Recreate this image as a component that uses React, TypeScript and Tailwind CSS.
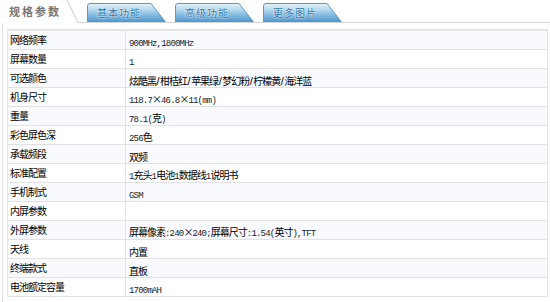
import React from "react";

const rows: [string, string][] = [
  ["网络频率", "900MHz,1800MHz"],
  ["屏幕数量", "1"],
  ["可选颜色", "炫酷黑/柑桔红/苹果绿/梦幻粉/柠檬黄/海洋蓝"],
  ["机身尺寸", "118.7×46.8×11(mm)"],
  ["重量", "78.1(克)"],
  ["彩色屏色深", "256色"],
  ["承载频段", "双频"],
  ["标准配置", "1充头1电池1数据线1说明书"],
  ["手机制式", "GSM"],
  ["内屏参数", ""],
  ["外屏参数", "屏幕像素:240×240;屏幕尺寸:1.54(英寸),TFT"],
  ["天线", "内置"],
  ["终端款式", "直板"],
  ["电池额定容量", "1700mAH"],
];

function Mixed({ text }: { text: string }) {
  const parts = text.match(/[A-Za-z0-9.,:;()]+|\/|[^A-Za-z0-9.,:;()/]+/g) || [];
  return (
    <span className="whitespace-nowrap">
      {parts.map((p, i) =>
        p === "/" ? (
          <span key={i} className="font-['Liberation_Sans',sans-serif] text-[11px] px-[0.5px]">
            /
          </span>
        ) : /^[A-Za-z0-9.,:;()]+$/.test(p) ? (
          <span key={i} className="font-['Liberation_Mono',monospace] text-[9px] tracking-[-0.8px] text-[#222]">
            {p}
          </span>
        ) : (
          <span key={i} className="text-[10px] tracking-[-1px]">
            {p}
          </span>
        )
      )}
    </span>
  );
}

function BlueTab({ label }: { label: string }) {
  return (
    <div className="relative w-[79px] h-[19px] flex items-center">
      <svg className="absolute inset-0" width="79" height="19" viewBox="0 0 79 19">
        <defs>
          <linearGradient id="tabg" x1="0" y1="0" x2="0" y2="1">
            <stop offset="0" stopColor="#e4f2fa" />
            <stop offset="0.35" stopColor="#b2d8ee" />
            <stop offset="1" stopColor="#4a95cd" />
          </linearGradient>
        </defs>
        <path d="M0.5 19 V3 Q0.5 0.5 3 0.5 H64 L78.5 19 Z" fill="url(#tabg)" stroke="#5b98c4" strokeWidth="1" />
      </svg>
      <span className="relative pl-[10px] text-[10px] tracking-[1px] text-[#2a6fa8] [text-shadow:0_0_2px_#ffffff,0_0_1px_#ffffff]">
        {label}
      </span>
    </div>
  );
}

export default function App() {
  return (
    <div className="w-[550px] h-[302px] bg-white overflow-hidden font-['Noto_Sans_CJK_SC',sans-serif] text-[#000]">
      {/* tab bar */}
      <div className="flex items-end h-[23px]">
        <div className="relative w-[79px] h-[23px] flex items-center">
          <svg className="absolute inset-0" width="79" height="23" viewBox="0 0 79 23">
            <path d="M67 0 L78 22.5 H79" fill="none" stroke="#d4d4d4" strokeWidth="1.2" />
          </svg>
          <span className="relative pl-[9px] text-[11px] font-bold tracking-[2px] text-[#777]">规格参数</span>
        </div>
        <div className="flex-1 h-[23px] border-b border-[#d4d4d4] flex items-end gap-[9px] pl-[8px]">
          <BlueTab label="基本功能" />
          <BlueTab label="高级功能" />
          <BlueTab label="更多图片" />
        </div>
      </div>
      {/* panel */}
      <div className="ml-[2px] border-l border-[#e0e0e0] pl-[4px] pt-[6px] h-[279px]">
        <div className="w-[541px] border-x border-t-2 border-[#e4e4e4]">
          {rows.map(([k, v], i) => (
            <div
              key={k}
              className={
                "flex h-[19px] border-b border-[#e2e2e2] " + (i % 2 === 0 ? "bg-[#f9fafd]" : "bg-white")
              }
            >
              <div className="w-[118px] shrink-0 border-r border-[#e2e2e2] pl-[2px] flex items-center text-[10px] tracking-[-1px] leading-none">
                {k}
              </div>
              <div className="pl-[3px] flex items-center leading-none">
                <Mixed text={v} />
              </div>
            </div>
          ))}
        </div>
      </div>
    </div>
  );
}
